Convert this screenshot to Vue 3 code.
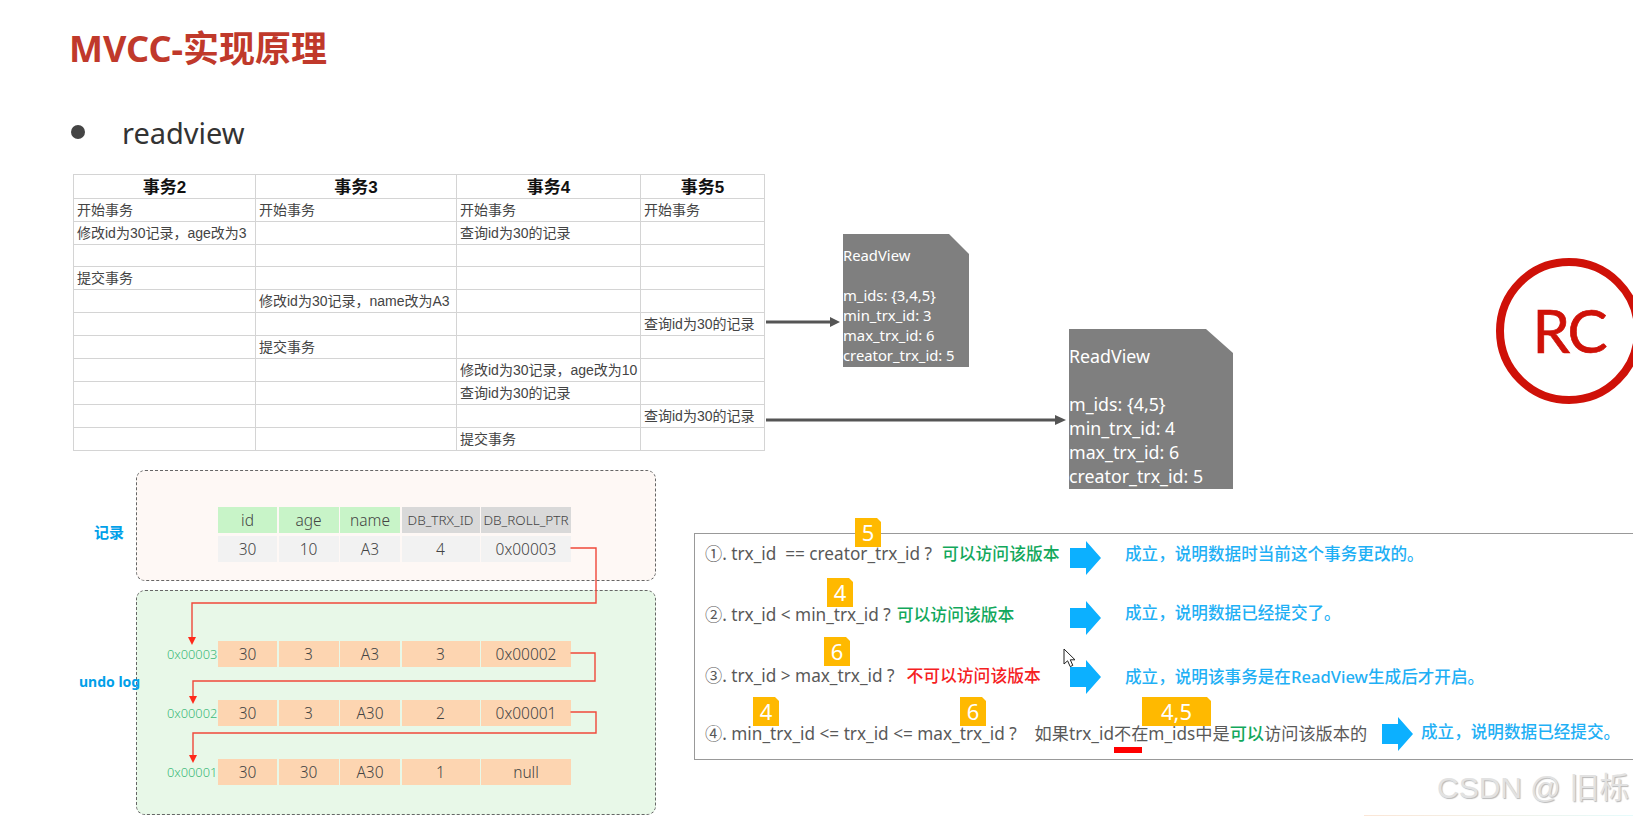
<template>
  <div class="slide">
    <h1 class="title">MVCC-实现原理</h1>
    <div class="bullet-line"><i class="dot"></i><span>readview</span></div>

    <!-- 事务 table -->
    <table class="trx-table">
      <thead>
        <tr>
          <th v-for="h in trxHeaders" :key="h">{{ h }}</th>
        </tr>
      </thead>
      <tbody>
        <tr v-for="(row, i) in trxRows" :key="i">
          <td v-for="(cell, j) in row" :key="j">{{ cell }}</td>
        </tr>
      </tbody>
    </table>

    <!-- record + undo log -->
    <div class="chain">
      <div class="zone zone-record">
        <span class="zone-label label-record">记录</span>
        <div class="rec-grid rec-head">
          <span v-for="(c, i) in recordHead" :key="c" :class="i < 3 ? 'h-green' : 'h-grey'">{{ c }}</span>
        </div>
        <div class="rec-grid rec-body">
          <span v-for="(c, i) in recordRow" :key="i">{{ c }}</span>
        </div>
      </div>
      <div class="zone zone-undo">
        <span class="zone-label label-undo">undo log</span>
        <div v-for="u in undoRows" :key="u.addr" class="undo-row">
          <span class="addr">{{ u.addr }}</span>
          <div class="rec-grid rec-undo">
            <span v-for="(c, i) in u.cells" :key="i">{{ c }}</span>
          </div>
        </div>
      </div>
      <svg class="links" width="480" height="345" viewBox="0 0 480 345">
        <g fill="none" stroke="#f0483a" stroke-width="1.4">
          <path d="M434.5 78H460V133H56V168" />
          <path d="M434.5 183H459V211H57V228" />
          <path d="M434.5 242H460V263H57V287" />
        </g>
        <g fill="#ff2a1a">
          <path d="M52 167h8l-4 8z" />
          <path d="M53 226h8l-4 8z" />
          <path d="M53 285h8l-4 8z" />
        </g>
      </svg>
    </div>

    <!-- arrows out of the table -->
    <svg class="out-arrow arrow-a" width="76" height="12" viewBox="0 0 76 12">
      <path d="M0 6H66" stroke="#555" stroke-width="3" />
      <path d="M64 1l10 5-10 5z" fill="#555" />
    </svg>
    <svg class="out-arrow arrow-b" width="302" height="12" viewBox="0 0 302 12">
      <path d="M0 6H292" stroke="#555" stroke-width="3" />
      <path d="M289 1l11 5-11 5z" fill="#555" />
    </svg>

    <div class="readview rv-small">
      <p v-for="(line, i) in readviewA" :key="i">{{ line }}</p>
    </div>
    <div class="readview rv-large">
      <p v-for="(line, i) in readviewB" :key="i">{{ line }}</p>
    </div>

    <div class="rc-mark">RC</div>

    <!-- rules -->
    <div class="rules">
      <div v-for="r in rules" :key="r.id" class="rule" :class="r.id">
        <span class="rule-expr" v-html="r.expr"></span>
        <span class="rule-verdict" :class="r.tone">{{ r.verdict }}</span>
        <svg class="go" viewBox="0 0 31 34" preserveAspectRatio="none">
          <path d="M0 7H16V0L31 17 16 34V27H0z" fill="#0cb0ff" />
        </svg>
        <span class="rule-result">{{ r.result }}</span>
      </div>
      <span v-for="b in badges" :key="b.id" class="badge" :class="b.id">{{ b.text }}</span>
      <i class="underline"></i>
    </div>

    <svg class="cursor" width="14" height="20" viewBox="0 0 14 20">
      <path d="M1 1V16L4.6 12.8 7.2 18.6 9.8 17.4 7.3 11.8H12z" fill="#fff" stroke="#222" stroke-width="1" />
    </svg>

    <div class="watermark">CSDN @ 旧栎</div>
    <i class="bottom-line"></i>
  </div>
</template>

<script setup>
const trxHeaders = ['事务2', '事务3', '事务4', '事务5']
const trxRows = [
  ['开始事务', '开始事务', '开始事务', '开始事务'],
  ['修改id为30记录，age改为3', '', '查询id为30的记录', ''],
  ['', '', '', ''],
  ['提交事务', '', '', ''],
  ['', '修改id为30记录，name改为A3', '', ''],
  ['', '', '', '查询id为30的记录'],
  ['', '提交事务', '', ''],
  ['', '', '修改id为30记录，age改为10', ''],
  ['', '', '查询id为30的记录', ''],
  ['', '', '', '查询id为30的记录'],
  ['', '', '提交事务', '']
]

const recordHead = ['id', 'age', 'name', 'DB_TRX_ID', 'DB_ROLL_PTR']
const recordRow = ['30', '10', 'A3', '4', '0x00003']
const undoRows = [
  { addr: '0x00003', cells: ['30', '3', 'A3', '3', '0x00002'] },
  { addr: '0x00002', cells: ['30', '3', 'A30', '2', '0x00001'] },
  { addr: '0x00001', cells: ['30', '30', 'A30', '1', 'null'] }
]

const readviewA = ['ReadView', '\u00a0', 'm_ids: {3,4,5}', 'min_trx_id: 3', 'max_trx_id: 6', 'creator_trx_id: 5']
const readviewB = ['ReadView', '\u00a0', 'm_ids: {4,5}', 'min_trx_id: 4', 'max_trx_id: 6', 'creator_trx_id: 5']

const rules = [
  {
    id: 'r1',
    expr: '①. trx_id&nbsp; == creator_trx_id ?',
    verdict: '可以访问该版本',
    tone: 'ok',
    result: '成立，说明数据时当前这个事务更改的。'
  },
  {
    id: 'r2',
    expr: '②. trx_id &lt; min_trx_id ?',
    verdict: '可以访问该版本',
    tone: 'ok',
    result: '成立，说明数据已经提交了。'
  },
  {
    id: 'r3',
    expr: '③. trx_id &gt; max_trx_id ?',
    verdict: '不可以访问该版本',
    tone: 'no',
    result: '成立，说明该事务是在ReadView生成后才开启。'
  },
  {
    id: 'r4',
    expr: '④. min_trx_id &lt;= trx_id &lt;= max_trx_id ?&nbsp;&nbsp;&nbsp; 如果trx_id不在m_ids中是<b>可以</b>访问该版本的',
    verdict: '',
    tone: '',
    result: '成立，说明数据已经提交。'
  }
]

const badges = [
  { id: 'b1', text: '5' },
  { id: 'b2', text: '4' },
  { id: 'b3', text: '6' },
  { id: 'b4', text: '4' },
  { id: 'b5', text: '6' },
  { id: 'b6', text: '4,5' }
]
</script>

<style>
html,
body {
  margin: 0;
  background: #fff;
}
</style>

<style scoped>
.slide {
  position: relative;
  width: 1633px;
  height: 816px;
  overflow: hidden;
  background: #fff;
  font-family: 'Noto Sans', 'Noto Sans CJK SC', sans-serif;
}
.title {
  margin: 0;
  padding: 26px 0 0 69px;
  height: 80px;
  box-sizing: border-box;
  font-size: 36px;
  line-height: 46px;
  font-weight: 700;
  color: #c0392b;
}
.bullet-line {
  display: flex;
  align-items: center;
  height: 40px;
  margin-top: 32px;
  padding-left: 71px;
  font-size: 29px;
  color: #333;
}
.dot {
  width: 14px;
  height: 14px;
  border-radius: 50%;
  background: #444;
  margin-right: 37px;
}
.trx-table {
  margin: 22px 0 0 73px;
  border-collapse: collapse;
  table-layout: fixed;
  width: 692px;
  font-family: 'Liberation Sans', 'Noto Sans CJK SC', sans-serif;
  color: #444;
}
.trx-table th,
.trx-table td {
  border: 1px solid #d4d4d4;
  height: 22px;
  padding: 0 0 0 3px;
  box-sizing: border-box;
  white-space: nowrap;
  overflow: hidden;
}
.trx-table th {
  height: 23px;
  font-size: 17px;
  line-height: 21px;
  color: #111;
  padding: 2px 0 0;
}
.trx-table td {
  font-size: 14px;
  line-height: 22px;
}
.trx-table th:nth-child(1) {
  width: 182px;
}
.trx-table th:nth-child(2) {
  width: 201px;
}
.trx-table th:nth-child(3) {
  width: 184px;
}
.chain {
  position: relative;
  margin: 19px 0 0 136px;
  width: 520px;
  display: flex;
  flex-direction: column;
  gap: 9px;
}
.zone {
  position: relative;
  border: 1.5px dashed #666;
  border-radius: 9px;
  box-sizing: border-box;
}
.zone-record {
  height: 111px;
  background: #fef8f5;
  padding: 36px 0 0 81px;
}
.zone-undo {
  height: 225px;
  background: #e8f8e8;
  padding-top: 50px;
  display: flex;
  flex-direction: column;
  gap: 33px;
}
.zone-label {
  position: absolute;
  font-weight: 700;
  font-size: 14px;
  color: #00a0e9;
  white-space: nowrap;
}
.label-record {
  left: -43px;
  top: 50px;
  font-size: 15px;
}
.label-undo {
  left: -58px;
  top: 81px;
}
.rec-grid {
  display: grid;
  grid-template-columns: 59px 60px 60px 78px 90px;
  column-gap: 1.5px;
  width: 353px;
  font-family: 'Noto Sans', 'Noto Sans CJK SC', sans-serif;
  font-size: 15.5px;
  font-weight: 300;
  color: #444;
  text-align: center;
}
.rec-grid span {
  height: 26px;
  line-height: 26px;
  white-space: nowrap;
  overflow: hidden;
}
.rec-head {
  margin-bottom: 3px;
}
.h-green {
  background: #c8f4c8;
}
.rec-grid .h-grey {
  background: #d9d9d9;
  font-size: 13.5px;
}
.rec-body span {
  background: #f2f2f2;
}
.undo-row {
  display: flex;
  align-items: center;
  height: 26px;
  padding-left: 30px;
}
.addr {
  width: 51px;
  font-size: 12.8px;
  font-weight: 300;
  color: #3cb878;
}
.rec-undo span {
  background: #fdd5b1;
}
.links {
  position: absolute;
  left: 0;
  top: 0;
  pointer-events: none;
}
.out-arrow {
  position: absolute;
  left: 766px;
}
.arrow-a {
  top: 316px;
}
.arrow-b {
  top: 414px;
}
.readview {
  position: absolute;
  box-sizing: border-box;
  background: #7f7f7f;
  color: #fff;
}
.readview p {
  margin: 0;
  white-space: nowrap;
}
.rv-small {
  left: 843px;
  top: 234px;
  width: 126px;
  height: 133px;
  padding-top: 11px;
  font-size: 14.8px;
  line-height: 20px;
  clip-path: polygon(0 0, 106px 0, 100% 20px, 100% 100%, 0 100%);
}
.rv-large {
  left: 1069px;
  top: 329px;
  width: 164px;
  height: 160px;
  padding-top: 15px;
  font-size: 17.8px;
  line-height: 24px;
  clip-path: polygon(0 0, 137px 0, 100% 24px, 100% 100%, 0 100%);
}
.rc-mark {
  position: absolute;
  left: 1496px;
  top: 258px;
  width: 146px;
  height: 146px;
  box-sizing: border-box;
  border: 8px solid #cf1108;
  border-radius: 50%;
  display: flex;
  align-items: center;
  justify-content: center;
  padding-bottom: 2px;
  font-size: 60px;
  letter-spacing: -2px;
  -webkit-text-stroke: 0.7px #cf1108;
  color: #cf1108;
  font-family: Lato, 'Open Sans', sans-serif;
}
.rules {
  position: absolute;
  left: 694px;
  top: 533px;
  width: 960px;
  height: 227px;
  box-sizing: border-box;
  border: 1.5px solid #999;
  padding: 7px 0 0 10px;
  display: flex;
  flex-direction: column;
  color: #595959;
  font-size: 17.2px;
}
.rule {
  position: relative;
  display: flex;
  align-items: center;
  height: 34px;
  white-space: nowrap;
}
.r2 {
  margin-top: 26px;
}
.r3 {
  margin-top: 25px;
}
.r4 {
  margin-top: 23px;
}
.rule-expr,
.rule-verdict {
  line-height: 16px;
}
.r1 .rule-expr,
.r1 .rule-verdict {
  margin-bottom: 8px;
}
.r2 .rule-expr,
.r2 .rule-verdict {
  margin-bottom: 6px;
}
.r3 .rule-expr,
.r3 .rule-verdict {
  margin-bottom: 2px;
}
.rule-verdict {
  margin-left: 10px;
  font-size: 16.8px;
  font-weight: 500;
}
.rule-verdict.ok {
  color: #12a85c;
}
.r2 .rule-verdict.ok {
  margin-left: 6px;
}
.rule-verdict.no {
  margin-left: 12px;
  color: #f5211f;
}
.rule-expr :deep(b) {
  font-weight: 500;
  color: #12a85c;
}
.go {
  position: absolute;
  left: 365px;
  top: 0;
  width: 31px;
  height: 34px;
}
.rule-result {
  position: absolute;
  left: 420px;
  top: 0;
  line-height: 34px;
  font-size: 16.6px;
  font-weight: 500;
  color: #1fb0f5;
}
.r1 .rule-result {
  top: -4px;
}
.r2 .rule-result {
  top: -5px;
}
.r4 .rule-result {
  top: -2px;
  left: 716px;
}
.r4 .go {
  left: 677px;
}
.badge {
  position: absolute;
  background: #ffb900;
  color: #fff;
  font-size: 22px;
  text-align: center;
  width: 26px;
  height: 29px;
  line-height: 29px;
  clip-path: polygon(0 0, calc(100% - 4px) 0, 100% 4px, 100% 100%, 0 100%);
}
.b1 {
  left: 160px;
  top: -16px;
}
.b2 {
  left: 132px;
  top: 44px;
}
.b3 {
  left: 129px;
  top: 103px;
}
.b4 {
  left: 58px;
  top: 163px;
}
.b5 {
  left: 265px;
  top: 163px;
}
.b6 {
  left: 447px;
  top: 163px;
  width: 69px;
}
.underline {
  position: absolute;
  left: 419px;
  top: 213px;
  width: 28px;
  height: 6px;
  background: #f00;
}
.cursor {
  position: absolute;
  left: 1063px;
  top: 648px;
}
.watermark {
  position: absolute;
  left: 1437px;
  top: 770px;
  font-family: 'Liberation Sans', 'Noto Sans CJK SC', sans-serif;
  font-size: 30px;
  line-height: 36px;
  white-space: nowrap;
  color: #e2e2e2;
  text-shadow: 1px 1px 1px #b8b8b8;
}
.bottom-line {
  position: absolute;
  left: 1364px;
  right: 0;
  bottom: 0;
  height: 1px;
  background: linear-gradient(90deg, #fbe6d6, #e6fbfb);
}
</style>
